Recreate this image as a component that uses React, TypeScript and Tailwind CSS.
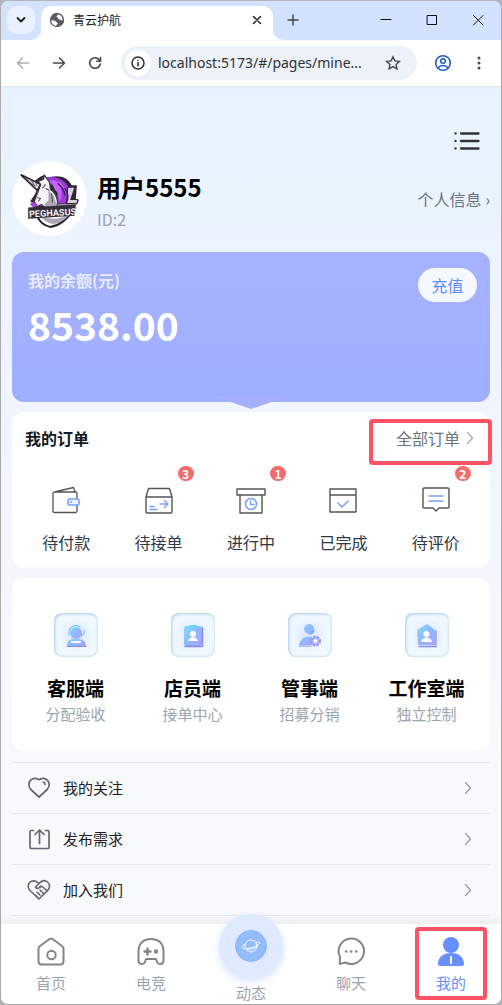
import React from "react";

type IconProps = { children: React.ReactNode; box: string; className: string };

function Drawing({ children, box, className }: IconProps) {
  return (
    <svg viewBox={box} className={className} fill="none" strokeLinecap="round" strokeLinejoin="round" aria-hidden="true">
      {children}
    </svg>
  );
}

function Chevron({ className }: { className: string }) {
  return (
    <Drawing box="0 0 8 14" className={className}>
      <path d="M1.5 1.5 6.5 7l-5 5.5" stroke="currentColor" strokeWidth="1.2" />
    </Drawing>
  );
}

function BrowserBar() {
  return (
    <header className="shrink-0">
      <div className="flex h-[39px] bg-[#d3e2ff]">
        <button aria-label="搜索标签页" className="ml-1.5 mt-[5px] flex size-7 items-center justify-center rounded-[10px] bg-[#e9f1ff]">
          <Drawing box="0 0 10 10" className="size-2.5">
            <path d="m1.5 3 3.500 3.500L8.500 3" stroke="#1f1f1f" strokeWidth="1.8" />
          </Drawing>
        </button>
        <div className="relative ml-1.5 mt-[5px] flex h-[34px] w-[232px] items-center rounded-t-[10px] bg-white pb-1.5">
          <svg viewBox="0 0 10 10" className="absolute -left-2.5 bottom-0 size-2.5" aria-hidden="true">
            <path d="M10 0v10H0A10 10 0 0 0 10 0Z" fill="#fff" />
          </svg>
          <svg viewBox="0 0 10 10" className="absolute -right-2.5 bottom-0 size-2.5" aria-hidden="true">
            <path d="M0 0v10h10A10 10 0 0 1 0 0Z" fill="#fff" />
          </svg>
          <Drawing box="0 0 16 16" className="ml-2 size-4">
            <circle cx="8" cy="8" r="7.200" fill="#5a5e63" />
            <path d="M2.200 8.200c1.800.2 4 .2 4.600 1.300.5 1 1.900.8 1.800 2 0 1-1.400 1-1.400 2.400-2.800-.3-5-2.700-5-5.700ZM9.200 2.200c-.4 1.200-1.600 1.100-1.600 2.300 0 1 1.600.8 1.600 1.800 0 1.300 1.500 1 2.100 1.700.7.7 1.600.2 2.400.2 0-3-1.800-5.400-4.500-6Z" fill="#fff" />
          </Drawing>
          <span className="ml-2 flex-1 text-xs text-[#1f1f1f]">青云护航</span>
          <button aria-label="关闭标签页" className="mr-2.5 flex size-3 items-center justify-center">
            <Drawing box="0 0 10 10" className="size-2.5">
              <path d="m1.500 1.500 7 7m0-7-7 7" stroke="#303030" strokeWidth="1.600" />
            </Drawing>
          </button>
        </div>
        <button aria-label="新建标签页" className="ml-[13px] mt-3 flex size-3.5 items-center justify-center">
          <Drawing box="0 0 12 12" className="size-3">
            <path d="M6 1v10M1 6h10" stroke="#474747" strokeWidth="1.500" />
          </Drawing>
        </button>
        <div className="ml-auto mt-3 flex items-start gap-8 pr-4">
          <button aria-label="最小化">
            <Drawing box="0 0 14 14" className="size-3.5"><path d="M2 6.500h10" stroke="#111" /></Drawing>
          </button>
          <button aria-label="最大化">
            <Drawing box="0 0 14 14" className="size-3.5"><path d="M2.500 2.500h9v9h-9Z" stroke="#111" /></Drawing>
          </button>
          <button aria-label="关闭">
            <Drawing box="0 0 14 14" className="size-3.5"><path d="m2.500 2.500 9.500 9.500m0-9.500-9.500 9.500" stroke="#111" /></Drawing>
          </button>
        </div>
      </div>
      <div className="flex h-[47px] items-center border-b border-[#dfe6e6] bg-white pl-3.5 pr-[13px]">
        <button aria-label="后退">
          <Drawing box="0 0 16 16" className="size-4"><path d="M13.500 8h-11M7.500 3 2.500 8l5 5" stroke="#adadad" strokeWidth="1.500" /></Drawing>
        </button>
        <button aria-label="前进" className="ml-5">
          <Drawing box="0 0 16 16" className="size-4"><path d="M2.500 8h11M8.500 3l5 5-5 5" stroke="#474747" strokeWidth="1.500" /></Drawing>
        </button>
        <button aria-label="重新加载" className="ml-5">
          <Drawing box="0 0 16 16" className="size-4"><path d="M13.200 9A5.300 5.300 0 1 1 12 4.500l1.300 1.400M13.500 2.500v3.700H9.800" stroke="#474747" strokeWidth="1.600" /></Drawing>
        </button>
        <div className="ml-[18px] flex h-[34px] flex-1 items-center rounded-full bg-[#ecf1fa] pl-1 pr-4">
          <button aria-label="网站信息" className="flex size-[26px] shrink-0 items-center justify-center rounded-full bg-white">
            <Drawing box="0 0 16 16" className="size-4">
              <circle cx="8" cy="8" r="6" stroke="#303030" strokeWidth="1.500" />
              <path d="M8 7.600v3.200M8 5.200v.1" stroke="#303030" strokeWidth="1.600" />
            </Drawing>
          </button>
          <input aria-label="地址" readOnly value="localhost:5173/#/pages/mine..." className="ml-[7px] w-0 flex-1 bg-transparent font-['Noto_Sans','Noto_Sans_CJK_SC',sans-serif] text-sm text-[#303134] outline-none" />
          <button aria-label="收藏">
            <Drawing box="0 0 16 16" className="size-4"><path d="m8 1.800 1.900 4.100 4.400.5-3.300 3 .9 4.400L8 11.600l-3.900 2.200.9-4.400-3.300-3 4.400-.5Z" stroke="#474747" strokeWidth="1.400" strokeLinejoin="miter" /></Drawing>
          </button>
        </div>
        <button aria-label="个人资料" className="ml-[17px]">
          <Drawing box="0 0 18 18" className="size-[18px]">
            <circle cx="9" cy="9" r="7.300" stroke="#1a5acb" strokeWidth="1.500" />
            <circle cx="9" cy="7" r="2.300" stroke="#1a5acb" strokeWidth="1.500" />
            <path d="M4 14c2.500-3.200 7.500-3.200 10 0" stroke="#1a5acb" strokeWidth="1.500" />
          </Drawing>
        </button>
        <button aria-label="更多" className="ml-[18px]">
          <Drawing box="0 0 18 18" className="size-[18px]">
            <circle cx="9" cy="4" r="1.500" fill="#474747" /><circle cx="9" cy="9" r="1.500" fill="#474747" /><circle cx="9" cy="14" r="1.500" fill="#474747" />
          </Drawing>
        </button>
      </div>
    </header>
  );
}

function Avatar() {
  return (
    <svg viewBox="0 0 74 74" className="size-[75px] shrink-0 rounded-full bg-white" role="img" aria-label="头像">
      <path d="M22 49c5 12 10 15 16 16 8-1 17-7 22-17l-3-3H23Z" fill="#fff" stroke="#292730" strokeWidth="2" />
      <path d="M26 52c6 6 21 7 31 0-4 6-11 10-17 10-5-1-10-4-14-10Z" fill="#aaa6b6" />
      <path d="M27 16l4-2 3 2 10-1c7 0 12 3 15 9h5l-1 14 3 1-2 4H24l-6-3 5-8 3-7-4-5Z" fill="#2c2832" />
      <path d="M29 17c11-3 22 0 26 8 4 6 4 12 1 17H42c4-7 4-13-2-18Z" fill="#9c39db" />
      <path d="M35 19c11-1 17 4 18 12l-5-6c1 6 2 10-1 15l-2-9-3-3c-1-4-3-7-7-9Z" fill="#c763f5" />
      <path d="M55 26h7l-4 12h7l-1 4H54Z" fill="#d7cfe4" stroke="#302a39" />
      <path d="M52 27c4 5 4 10 1 15M45 22c5 4 7 8 7 12" stroke="#462060" strokeWidth="1.500" fill="none" />
      <path d="m31 18 1-4 5 7 1 7c3 2 6 6 7 12l-1 6H33l-4-3-4 2-3-5 3-8 3-8-2-4 3-1Z" fill="#f5f3f7" stroke="#413c47" strokeWidth="1.200" />
      <path d="m36 29 5 5 3 9-3 3-4-2-2 4-3-5 4-4Z" fill="#aaa5b3" />
      <path d="m39 32 1 9m-7-14 4 2m-7-2 3-4M25 36l3 1-2 3" stroke="#58515e" strokeWidth="1.100" fill="none" />
      <path d="m8 13 20 10-3 6Z" fill="#f6f4f8" stroke="#28242e" strokeWidth="1.600" strokeLinejoin="round" />
      <path d="m12 16 9 8m-3-6 5 7m0-4 2 4" stroke="#5b5763" strokeWidth="1" />
      <path d="M18 43c0-2 2-3 4-2l4 3-5 2Z" fill="#a343df" />
      <path d="M16 46l47-3-1 11-46 3Z" fill="#332e39" />
      <text x="17" y="55.500" fill="#f3eff5" fontFamily="Liberation Sans Narrow, Roboto, sans-serif" fontSize="9" fontWeight="700" transform="rotate(-3 17 55)">PEGHASUS</text>
    </svg>
  );
}

const ink = "#555";
const blue = "#76a0ff";

const orders = [
  {
    label: "待付款",
    art: <><path d="M3.500 6h21q1.500 0 1.500 1.500V13m0 6v6q0 1.500-1.500 1.500h-21Q2 26.500 2 25V7.500Q2 6 3.500 6L22.500 1.500 24 6" stroke={ink} strokeWidth="1.300" /><rect x="17" y="13" width="11" height="6" rx="1.500" stroke={blue} strokeWidth="1.600" fill="#eef3ff" /><path d="M20 16h.1" stroke={blue} strokeWidth="1.800" /></>,
  },
  {
    label: "待接单",
    badge: 3,
    art: <><path d="M2 11 4.500 2.500h21L28 11v15q0 1-1 1H3q-1 0-1-1Zm0 0h26" stroke={ink} strokeWidth="1.400" /><path d="M16 18h8m-3.500-3.500L24 18l-3.500 3.500M6 20.500h4M6 23.500h7" stroke={blue} strokeWidth="1.400" /></>,
  },
  {
    label: "进行中",
    badge: 1,
    art: <><path d="M1 3h28v6H1ZM4 9v18h22V9" stroke={ink} strokeWidth="1.400" /><circle cx="15" cy="18" r="5.500" stroke={blue} strokeWidth="1.500" /><path d="M14.500 15v3.500H18" stroke={blue} strokeWidth="1.400" /></>,
  },
  {
    label: "已完成",
    art: <><path d="M2 3h26v23H2Zm0 6h26" stroke={ink} strokeWidth="1.400" /><path d="m10 17 4 4 6-6" stroke={blue} strokeWidth="1.500" /></>,
  },
  {
    label: "待评价",
    badge: 2,
    art: <><path d="M3 2h24q1 0 1 1v18q0 1-1 1h-9l-3 3-3-3H3q-1 0-1-1V3q0-1 1-1Z" stroke={ink} strokeWidth="1.400" /><path d="M8 10h14M8 15h14" stroke={blue} strokeWidth="1.500" /></>,
  },
];

const services = [
  {
    label: "客服端",
    note: "分配验收",
    art: <><path d="M13 33c0-6 3-7 7-7h5c4 0 7 3 7 7Z" fill="url(#tint)" /><path d="M15 22v-2a7 7 0 0 1 11-6M30 17q1 2 0 4l-3 2" stroke="#79cbed" strokeWidth="1.200" /><circle cx="22" cy="20" r="6" fill="url(#tint)" /><path d="M13 33.500h19" stroke="#878de9" /><path d="M18 29h8" stroke="#fff" strokeWidth="2" /></>,
  },
  {
    label: "店员端",
    note: "接单中心",
    art: <><rect x="13" y="13" width="18" height="20" rx="2" fill="url(#tint)" /><path d="M14 33.500h16.500q1 0 1-1V15" stroke="#858ae8" strokeWidth="1.500" /><path d="M19 13h6" stroke="#66daec" strokeWidth="2" /><circle cx="22" cy="21" r="3" fill="#fff" /><path d="M17 28c1-5 9-5 10 0Z" fill="#fff" /></>,
  },
  {
    label: "管事端",
    note: "招募分销",
    art: <><circle cx="21" cy="16" r="5" fill="url(#tint)" /><path d="M26 17a5 5 0 0 1-4 4" stroke="#6db8e9" strokeWidth="1.500" /><path d="M11 32c1-7 7-10 13-8v8Z" fill="url(#tint)" /><path d="M11 33h12" stroke="#8590e9" /><circle cx="27.500" cy="28" r="4.500" fill="#a8abff" stroke="#9b98ee" strokeWidth="2" strokeDasharray="2.200 1.500" strokeLinecap="butt" /><circle cx="27.500" cy="28" r="2" fill="#fff" /></>,
  },
  {
    label: "工作室端",
    note: "独立控制",
    art: <><path d="m12 17 10-6 8 6v15H13Z" fill="url(#tint)" /><path d="M14 33.500h17V18" stroke="#8290e9" strokeWidth="1.300" /><circle cx="21.500" cy="21" r="3" fill="#fff" /><path d="M16 29c1-6 10-6 11 0Z" fill="#fff" /></>,
  },
];

const links = [
  {
    label: "我的关注",
    art: <><path d="M12 21 3.800 13.500C1.200 10.500 1.200 6.500 3.700 4.200 6 2 9.300 2.200 12 3.700c2.700-1.500 6-1.700 8.300.5 2.500 2.300 2.500 6.300-.1 9.300Z" stroke="#656473" strokeWidth="1.700" /><path d="M16 6q2 .5 2.300 2.500" stroke="#656473" strokeWidth="1.600" /></>,
  },
  {
    label: "发布需求",
    art: <path d="M6.500 3.500H4q-1 0-1 1v16q0 1 1 1h17q1 0 1-1v-16q0-1-1-1h-2.500M12.500 16.500V3m-4.500 4.500L12.500 3 17 7.500" stroke="#656473" strokeWidth="1.700" />,
  },
  {
    label: "加入我们",
    art: <path d="M12 21 2.500 12C0 8.500 1.500 4 5 3q4-.8 7 2.500C15 2.200 18 2 20.500 4c3 2.500 2.500 6 0 8.500L12 21ZM12 5.500 8.500 9q1.500 2.500 4 .5l2-1.500 6 5M10 14l3 3m0-5 3.500 3.500M8.500 17l2 2" stroke="#656473" strokeWidth="1.600" />,
  },
];

const tabs = [
  {
    label: "首页",
    art: <><path d="M3 10 12.500 3q1.500-1 3 0L25 10q1.500 1 1.500 2.500V25q0 3.500-3 3.500h-19q-3 0-3-3.500V12.500Q1.500 11 3 10Z" /><circle cx="14.500" cy="19" r="4.200" /></>,
  },
  {
    label: "电竞",
    art: <><path d="M1.500 25V15C1.500 7 7 3 14 3s12.500 4 12.500 12v10c0 3.500-5.500 4-6.500 1l-1-3H9l-1 3c-1 3-6.500 2.500-6.500-1Z" /><path d="M10.500 12.500v6m-3-3h6" strokeWidth="2.400" /><circle cx="19" cy="15.500" r="1.200" /></>,
  },
  { label: "动态", art: null },
  {
    label: "聊天",
    art: <><path d="M2.800 28 3 21a12.700 12.700 0 1 1 5.500 5.500q-2.500.5-5.700 1.500Z" /><path d="M9 15.500h.1m5 0h.1m5 0h.1" strokeWidth="2.600" /></>,
  },
  {
    label: "我的",
    art: <><circle cx="14" cy="9" r="8" fill="#6690ff" stroke="none" /><path d="M1 27c1-7 6-10 13-10s12 3 13 10q.5 3-2.500 3h-21Q.500 30 1 27Z" fill="#6690ff" stroke="none" /><path d="M14 21v6" stroke="#fff" strokeWidth="2" /></>,
  },
];

export default function App() {
  return (
    <div className="h-screen bg-[#b4b4b8] pt-px font-['Noto_Sans_CJK_SC',sans-serif]">
      <div className="flex h-full flex-col overflow-hidden rounded-lg border-x border-b border-[#aaa] bg-white">
        <BrowserBar />
        <main className="min-h-0 flex-1 overflow-hidden bg-linear-to-b from-[#e6f3ff] via-[#f1f5ff] via-40% to-[#f8f9fb] to-80% px-[11px]">
          <div className="flex h-[74px] items-end justify-end pb-2.5 pr-2.5">
            <button aria-label="菜单">
              <Drawing box="0 0 26 20" className="h-5 w-[26px]">
                <path d="M1.500 2.500h.1m0 7.500h-.1m0 7.500h.1M7 2.500h17.500M7 10h17.500M7 17.500h17.500" stroke="#333" strokeWidth="2.300" />
              </Drawing>
            </button>
          </div>
          <section className="flex items-center">
            <Avatar />
            <div className="ml-2.5 flex-1 pt-1">
              <h1 className="text-2xl leading-8 font-bold text-black">用户5555</h1>
              <p className="mt-1 text-base leading-6 text-[#9ca3af]">ID:2</p>
            </div>
            <a href="#profile" className="text-base text-[#6b7280]">个人信息 ›</a>
          </section>

          <section className="relative mt-4 flex h-[150px] items-start justify-between rounded-xl bg-linear-to-b from-[#a6b2ff] to-[#9eafff] p-4">
            <div>
              <h2 className="text-base leading-6 font-bold text-white/75">我的余额(元)</h2>
              <p className="mt-1 text-[39px] leading-[56px] font-bold text-white">8538.00</p>
            </div>
            <button className="mr-[-3px] h-[34px] w-[59px] rounded-full bg-[#f5f8ff] text-base text-[#5f8cff]">充值</button>
            <svg viewBox="0 0 76 14" className="absolute top-36 left-1/2 h-3.5 w-[76px] -translate-x-1/2" aria-hidden="true">
              <path d="M0 0h76L38 13Z" fill="#a6b0ff" />
            </svg>
          </section>

          <section className="relative mt-2.5 rounded-xl bg-white px-2 pt-3 pb-[11px]">
            <div className="flex h-7 items-center justify-between pr-2 pl-[5px]">
              <h2 className="text-base font-bold text-[#111827]">我的订单</h2>
              <a href="#orders" className="flex items-center gap-1.5 text-base text-[#6b7280]">
                全部订单
                <Chevron className="h-3.5 w-2 text-[#aaa]" />
              </a>
            </div>
            <div className="pointer-events-none absolute -right-0.5 top-[7px] h-[46px] w-[123px] rounded-sm border-4 border-[#ff5265]" />
            <div className="grid grid-cols-5 pt-[34px]">
              {orders.map((order) => (
                <button key={order.label} className="relative flex flex-col items-center gap-3">
                  <Drawing box="0 0 30 30" className="size-[30px]">{order.art}</Drawing>
                  <span className="text-base leading-7 text-[#303846]">{order.label}</span>
                  {order.badge && (
                    <span className="absolute -top-5 left-1/2 ml-[19px] flex h-[15px] w-4 items-center justify-center rounded-full bg-[#f56c6c] text-xs font-bold text-white">{order.badge}</span>
                  )}
                </button>
              ))}
            </div>
          </section>

          <svg className="absolute size-0" aria-hidden="true">
            <defs>
              <linearGradient id="tint" x1="0" y1="0" x2="1" y2="1">
                <stop stopColor="#7de0f2" /><stop offset=".5" stopColor="#91b8ff" /><stop offset="1" stopColor="#a9a2ff" />
              </linearGradient>
            </defs>
          </svg>
          <section className="mt-[11px] grid grid-cols-4 rounded-xl bg-white px-[5px] pt-[35px] pb-[25px]">
            {services.map((service) => (
              <button key={service.label} className="flex flex-col items-center">
                <span className="flex size-[44px] rounded-lg bg-radial from-[#dde6ff] to-[#f0f8ff] to-60% shadow-[inset_1px_1px_3px_#a9cbee,inset_-1px_-1px_2px_#d6e9fb]">
                  <Drawing box="0 0 44 44" className="size-[44px]">{service.art}</Drawing>
                </span>
                <span className="mt-[17px] text-[19px] leading-7 font-bold text-black">{service.label}</span>
                <span className="text-[15px] leading-6 text-[#9ca3af]">{service.note}</span>
              </button>
            ))}
          </section>

          <nav className="mt-[11px] border-b border-[#e5e7eb]">
            {links.map((link) => (
              <a key={link.label} href="#more" className="flex h-[51px] items-center border-t border-[#e5e7eb] pr-[18px] pl-[15px] text-[15px] text-[#222]">
                <Drawing box="0 0 24 24" className="mr-3 size-6">{link.art}</Drawing>
                <span className="flex-1">{link.label}</span>
                <Chevron className="h-3.5 w-2 text-[#999]" />
              </a>
            ))}
          </nav>
        </main>

        <nav className="relative grid h-20 shrink-0 grid-cols-5 bg-white shadow-[0_-3px_10px_rgba(0,0,0,0.06)]">
          {tabs.map((tab) =>
            tab.art ? (
              <a key={tab.label} href="#tab" className={tab.label === "我的" ? "relative flex flex-col items-center pt-3 text-[#6690ff]" : "flex flex-col items-center pt-3 text-[#9ca3af]"}>
                <svg viewBox="0 0 28 31" className="h-[31px] w-7" fill="none" stroke="#858585" strokeWidth="2" strokeLinecap="round" strokeLinejoin="round" aria-hidden="true">{tab.art}</svg>
                <span className="mt-1 text-[15px] leading-6">{tab.label}</span>
                {tab.label === "我的" && <span className="pointer-events-none absolute top-[3px] left-1/2 h-[73px] w-[72px] -translate-x-1/2 rounded-sm border-4 border-[#ff5265]" />}
              </a>
            ) : (
              <a key={tab.label} href="#tab" className="-mt-2.5 flex flex-col items-center text-[#9ca3af]">
                <span className="flex size-16 items-center justify-center rounded-full bg-[#dfe9ff] shadow-[0_3px_8px_#d5e1ff]">
                  <Drawing box="0 0 32 32" className="size-8">
                    <circle cx="16" cy="16" r="15.500" fill="#94bcfa" stroke="#83aff5" strokeWidth=".8" />
                    <circle cx="16" cy="16" r="6" stroke="#fff" strokeWidth=".9" />
                    <path d="M10.500 14C6 16 6 18 9 18.500c5 1 18-4 15.500-6-.5-.5-2-.4-3.500 0M11 19c4 1 8 0 11-3" stroke="#fff" strokeWidth=".9" />
                  </Drawing>
                </span>
                <span className="mt-[3px] text-[15px] leading-6">{tab.label}</span>
              </a>
            ),
          )}
        </nav>
      </div>
    </div>
  );
}
